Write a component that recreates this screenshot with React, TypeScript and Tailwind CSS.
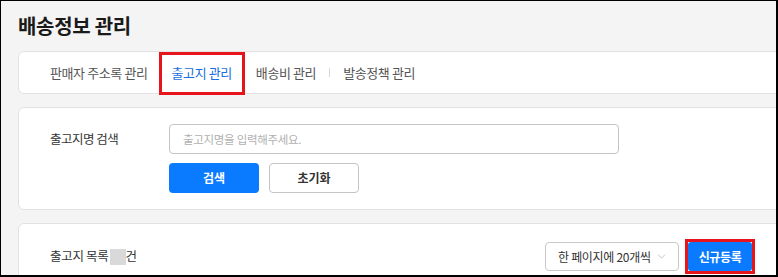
import React from 'react';
import { ChevronDown } from 'lucide-react';

const tabs = [
  { id: 'seller', label: '판매자 주소록 관리' },
  { id: 'release', label: '출고지 관리' },
  { id: 'fee', label: '배송비 관리' },
  { id: 'policy', label: '발송정책 관리' },
];

export default function App() {
  const activeTab = 'release';

  return (
    <div
      className="w-[778px] h-[277px] overflow-hidden bg-[#f4f4f4] border-l border-t border-r-2 border-b-2 border-black"
      style={{ fontFamily: '"Noto Sans CJK KR", "Noto Sans", sans-serif' }}
    >
      <div className="pl-[17px] w-[782px]">
        {/* Title */}
        <h1 className="pt-[12px] h-[50px] text-[20px] leading-[26px] font-bold text-[#1a1a1a] tracking-[-0.3px]">
          배송정보 관리
        </h1>

        {/* Tabs */}
        <div className="h-[43px] bg-white border border-[#e2e2e2] rounded-l-[6px] flex items-stretch pl-[19px]">
          {tabs.map((tab, i) => {
            const isActive = tab.id === activeTab;
            return (
              <React.Fragment key={tab.id}>
                {i === 3 && <span className="self-center w-px h-[9px] bg-[#d8d8d8] mx-[1px]" />}
                <div className="relative px-[12px] flex items-center">
                  <span
                    className={`text-[13px] tracking-[-0.4px] ${
                      isActive ? 'text-[#1a6fe0]' : 'text-[#555]'
                    }`}
                  >
                    {tab.label}
                  </span>
                  {isActive && (
                    <span className="absolute left-[-1px] right-[-1px] top-0 h-[43px] border-[3px] border-[#e8141c]" />
                  )}
                </div>
              </React.Fragment>
            );
          })}
        </div>

        {/* Search */}
        <div className="mt-[13px] h-[103px] bg-white border border-[#e2e2e2] rounded-l-[6px] pl-[31px] pt-[16px]">
          <div className="flex items-center">
            <div className="w-[119px] text-[12.5px] text-[#333] tracking-[-0.5px]">출고지명 검색</div>
            <input
              className="w-[450px] h-[30px] border border-[#c4c4c4] rounded-[4px] px-[13px] text-[11.5px] tracking-[-0.3px] placeholder:text-[#b0b0b0] outline-none"
              placeholder="출고지명을 입력해주세요."
            />
          </div>
          <div className="flex gap-[10px] mt-[9px] ml-[119px]">
            <button className="w-[90px] h-[30px] rounded-[4px] bg-[#0a7bff] text-white text-[12px] font-bold">
              검색
            </button>
            <button className="w-[90px] h-[30px] rounded-[4px] bg-white border border-[#c4c4c4] text-[#333] text-[12px] font-bold">
              초기화
            </button>
          </div>
        </div>

        {/* List */}
        <div className="mt-[13px] h-[80px] bg-white border border-[#e2e2e2] rounded-l-[6px] pl-[31px] pr-[30px] pt-[18px] flex items-start justify-between">
          <div className="flex items-center h-[29px] text-[12.5px] text-[#333] tracking-[-0.3px]">
            <span>출고지 목록</span>
            <span className="inline-block w-[16px] h-[16px] bg-[#d9d9d9] ml-[1px]" />
            <span>건</span>
          </div>
          <div className="flex items-center gap-[9px]">
            <div className="w-[134px] h-[29px] border border-[#c8c8c8] rounded-[4px] flex items-center justify-between pl-[12px] pr-[10px]">
              <span className="text-[12px] text-[#333] tracking-[-0.3px]">한 페이지에 20개씩</span>
              <ChevronDown className="w-[13px] h-[13px] text-[#aaa]" strokeWidth={1.25} />
            </div>
            <div className="relative">
              <button className="w-[64px] h-[29px] rounded-[3px] bg-[#0a7bff] text-white text-[12px] font-bold tracking-[-0.4px]">
                신규등록
              </button>
              <span className="absolute -inset-[3px] border-[3px] border-[#e8141c]" />
            </div>
          </div>
        </div>
      </div>
    </div>
  );
}
